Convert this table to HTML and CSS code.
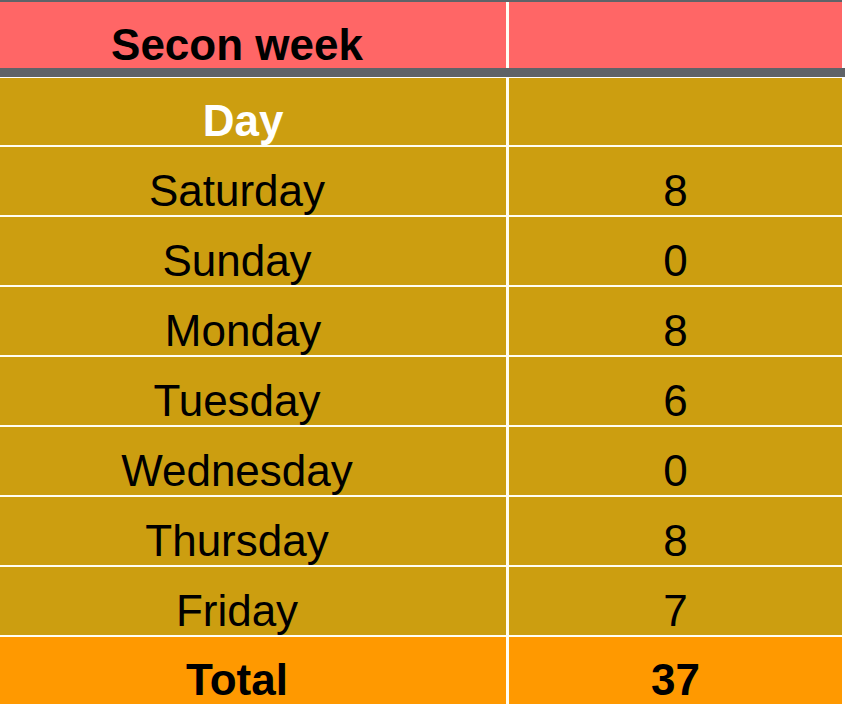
FILE: index.html
```html
<!DOCTYPE html>
<html>
<head>
<meta charset="utf-8">
<link rel="stylesheet" href="styles.css">
</head>
<body>
<div class="sheet">
  <div class="head-row">
    <div class="cell c1 head bold">Secon week</div>
    <div class="cell c2 head"></div>
  </div>
  <div class="band"></div>
  <div class="grid">
    <div class="cell c1 gold bold white pre first"> Day</div>
    <div class="cell c2 gold first"></div>
    <div class="cell c1 gold">Saturday</div>
    <div class="cell c2 gold">8</div>
    <div class="cell c1 gold">Sunday</div>
    <div class="cell c2 gold">0</div>
    <div class="cell c1 gold pre"> Monday</div>
    <div class="cell c2 gold">8</div>
    <div class="cell c1 gold">Tuesday</div>
    <div class="cell c2 gold">6</div>
    <div class="cell c1 gold">Wednesday</div>
    <div class="cell c2 gold">0</div>
    <div class="cell c1 gold">Thursday</div>
    <div class="cell c2 gold">8</div>
    <div class="cell c1 gold">Friday</div>
    <div class="cell c2 gold">7</div>
    <div class="cell c1 total bold">Total</div>
    <div class="cell c2 total bold">37</div>
  </div>
</div>
</body>
</html>
```

FILE: styles.css
```css
html, body {
  margin: 0;
  padding: 0;
  background: #ffffff;
}

body {
  font-family: "Liberation Sans", Arial, sans-serif;
  color: #000000;
}

.sheet {
  width: 845px;
  height: 704px;
  overflow: hidden;
}

.head-row {
  display: grid;
  grid-template-columns: 506px 333px;
  column-gap: 3px;
  width: 842px;
  height: 66px;
  border-top: 2px solid #5f6368;
  background: #fffef4;
}

.band {
  height: 9px;
  background: #5f6368;
  margin-bottom: 1px;
}

.grid {
  display: grid;
  grid-template-columns: 506px 333px;
  grid-template-rows: 67px;
  grid-auto-rows: 68px;
  column-gap: 3px;
  row-gap: 2px;
  width: 842px;
  background: #fffef4;
}

.cell {
  display: flex;
  align-items: flex-end;
  justify-content: center;
  font-size: 44px;
  line-height: 46px;
  padding-bottom: 1px;
  box-sizing: border-box;
}

.c1 {
  padding-right: 32px;
}

.head {
  background: #ff6666;
  padding-bottom: 0;
}

.gold {
  background: #cc9e10;
}

.total {
  background: #ff9900;
  padding-bottom: 2px;
}

.bold {
  font-weight: bold;
}

.white {
  color: #ffffff;
}

.pre {
  white-space: pre;
}
```
